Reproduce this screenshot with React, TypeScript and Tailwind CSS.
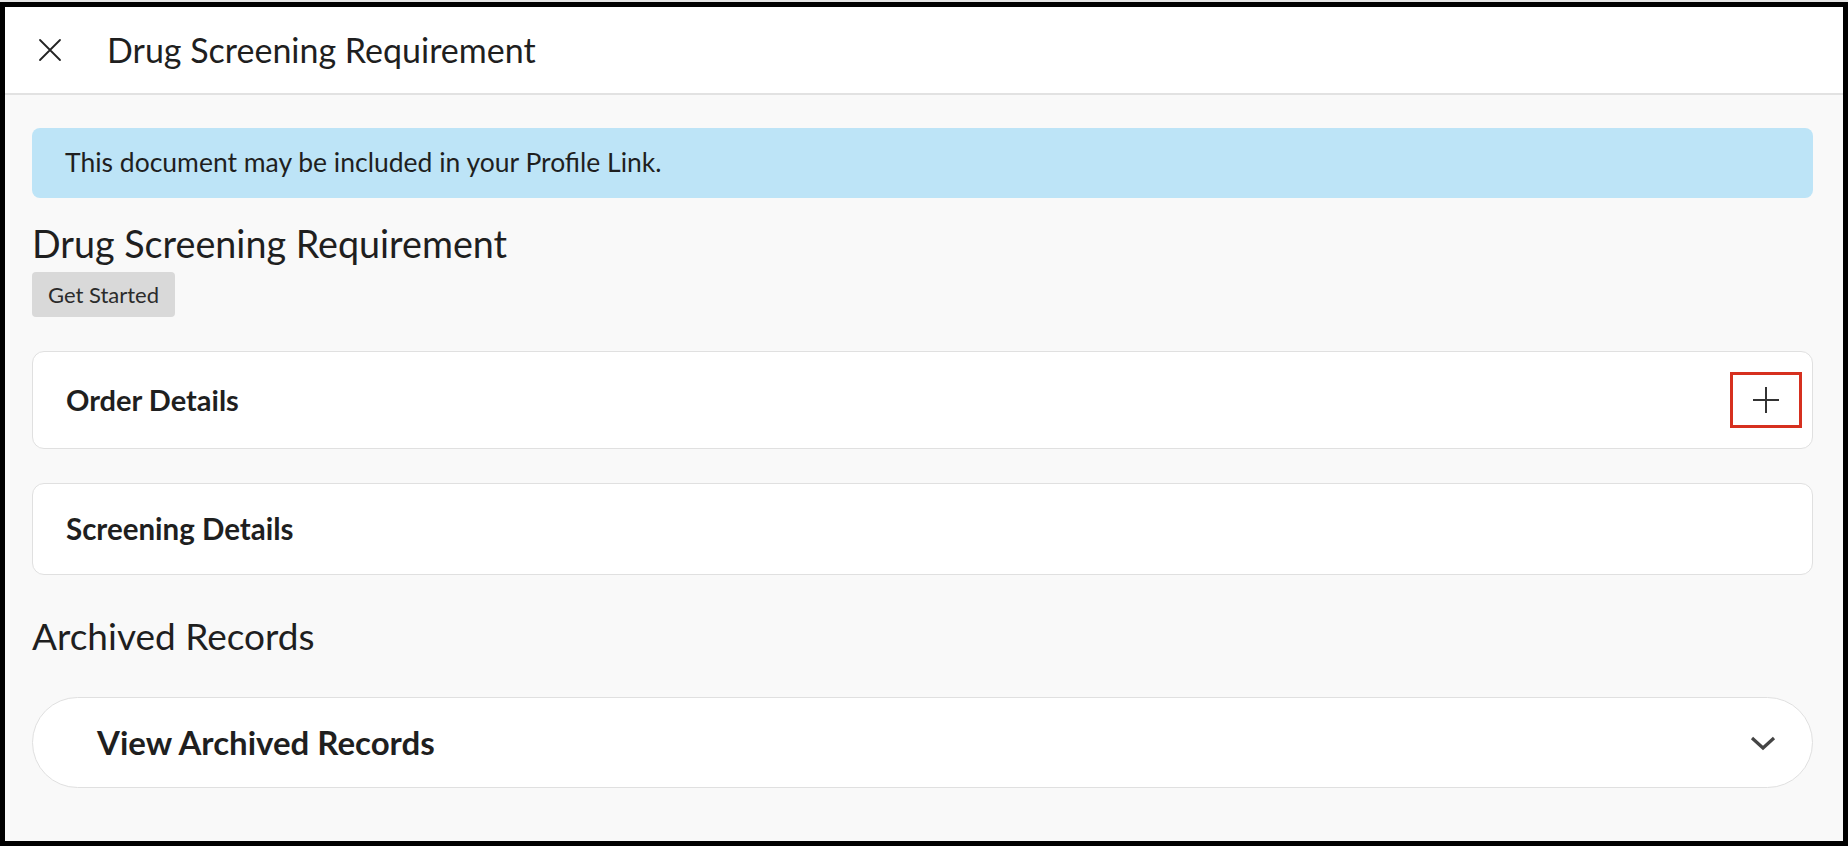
import { ReactNode } from "react";

function XIcon() {
  return (
    <svg width="24" height="24" viewBox="0 0 24 24" className="text-[#222]">
      <path d="M2 2 L22 22 M22 2 L2 22" stroke="currentColor" strokeWidth="1.8" strokeLinecap="round" fill="none" />
    </svg>
  );
}

function PlusIcon() {
  return (
    <svg width="28" height="28" viewBox="0 0 28 28" className="text-[#333]">
      <path d="M14 1 V27 M1 14 H27" stroke="currentColor" strokeWidth="2" fill="none" />
    </svg>
  );
}

function ChevronDown() {
  return (
    <svg width="26" height="16" viewBox="0 0 26 16" className="text-[#444]">
      <path d="M2 3 L13 13 L24 3" stroke="currentColor" strokeWidth="3.2" fill="none" />
    </svg>
  );
}

function Card({ children, className }: { children: ReactNode; className?: string }) {
  return (
    <div
      className={
        "flex items-center justify-between bg-white border border-[#e0e0e0] " +
        (className ?? "")
      }
    >
      {children}
    </div>
  );
}

export default function App() {
  return (
    <div className="h-[846px] w-[1848px] bg-[#e5e5e5] pt-[2px] font-['Lato',sans-serif] text-[#1f1f1f]">
      <div className="h-[844px] border-[5px] border-black bg-[#f9f9f9] flex flex-col">
        {/* header bar */}
        <header className="h-[88px] shrink-0 bg-white border-b-2 border-[#e2e2e2] flex items-center pl-[33px]">
          <button className="w-6 h-6 flex items-center justify-center">
            <XIcon />
          </button>
          <h1 className="ml-[45px] text-[34px] leading-none">Drug Screening Requirement</h1>
        </header>

        <main className="flex flex-col pl-[27px] pr-[30px]">
          <div className="mt-[33px] h-[70px] rounded-lg bg-[#bde4f7] flex items-center pl-[33px] text-[26.5px]">
            This document may be included in your Profile Link.
          </div>

          <h2 className="mt-[26px] text-[37.7px] leading-[40px]">Drug Screening Requirement</h2>
          <div className="mt-2">
            <button className="h-[45px] px-4 rounded-sm bg-[#d9d9d9] text-[22px] text-[#2b2b2b]">
              Get Started
            </button>
          </div>

          <Card className="mt-[34px] h-[98px] rounded-xl pl-[33px] pr-[10px]">
            <span className="text-[29px] font-bold">Order Details</span>
            <button className="w-[72px] h-[56px] border-[3px] border-[#d6301f] flex items-center justify-center">
              <PlusIcon />
            </button>
          </Card>

          <Card className="mt-[34px] h-[92px] rounded-xl pl-[33px]">
            <span className="text-[29.5px] font-bold">Screening Details</span>
          </Card>

          <h2 className="mt-[41px] text-[37px] leading-[40px]">Archived Records</h2>

          <Card className="mt-[41px] h-[91px] rounded-full pl-[64px] pr-[36px]">
            <span className="text-[33px] font-bold">View Archived Records</span>
            <ChevronDown />
          </Card>
        </main>
      </div>
    </div>
  );
}
